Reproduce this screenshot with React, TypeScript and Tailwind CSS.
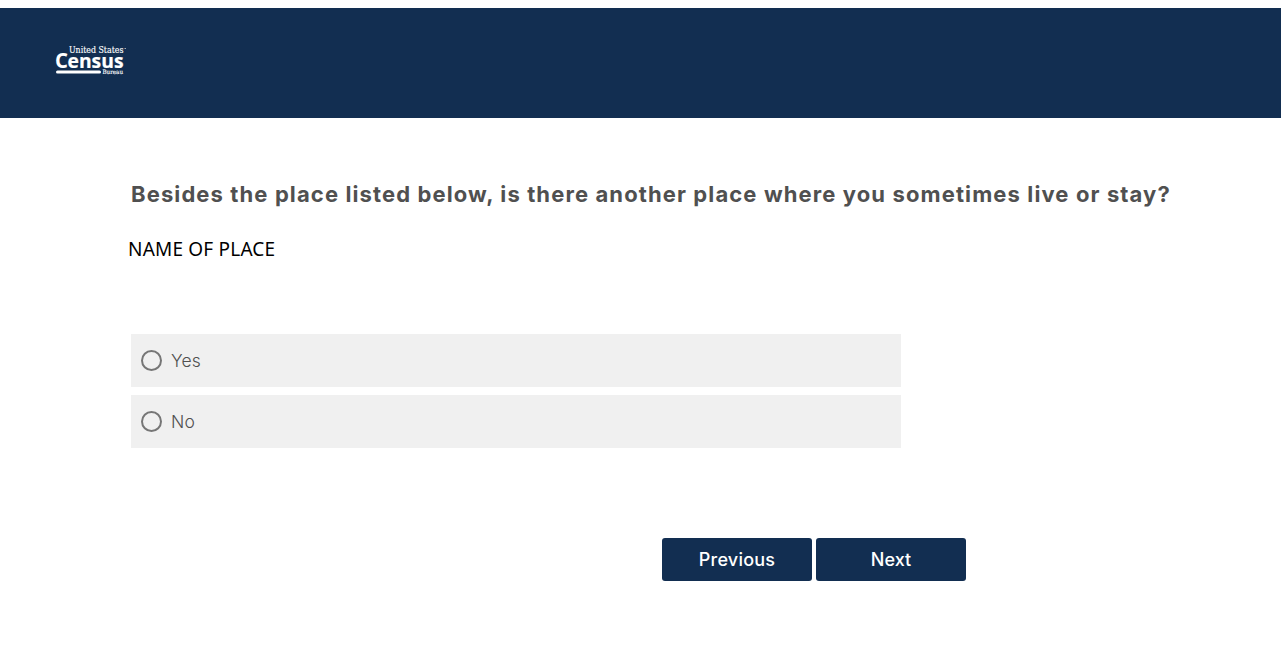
import { useState } from 'react';

const options = ['Yes', 'No'];

function CensusLogo() {
  return (
    <svg width="76" height="36" viewBox="0 -2 76 36" fill="#ffffff" className="overflow-visible" role="img" aria-label="United States Census Bureau">
      <text x="14" y="8.8" fontSize="8.8" stroke="#ffffff" strokeWidth="0.15" textLength="54.5" lengthAdjust="spacingAndGlyphs" className="font-['DejaVu_Serif',serif]">
        United States
      </text>
      <rect x="69.5" y="4" width="1.5" height="1" opacity="0.6" />
      <text x="0" y="23.5" fontSize="22" fontWeight="700" textLength="13" lengthAdjust="spacingAndGlyphs" className="font-['Open_Sans',sans-serif]">
        C
      </text>
      <text x="12.5" y="23.5" fontSize="19.5" fontWeight="700" stroke="#ffffff" strokeWidth="0.2" textLength="56" lengthAdjust="spacingAndGlyphs" className="font-['Open_Sans',sans-serif]">
        ensus
      </text>
      <rect x="1" y="26.5" width="45" height="3" rx="1.5" />
      <text x="47.5" y="29.5" fontSize="6" stroke="#ffffff" strokeWidth="0.15" textLength="20.5" lengthAdjust="spacingAndGlyphs" className="font-['DejaVu_Serif',serif]">
        Bureau
      </text>
    </svg>
  );
}

export default function App() {
  const [answer, setAnswer] = useState<string | null>(null);

  return (
    <div className="h-[647px] overflow-hidden bg-white pt-2 font-['Inter',sans-serif]">
      {/* Header */}
      <header className="h-[110px] bg-[#122e51] pl-[55px] pt-[34px]">
        <CensusLogo />
      </header>

      <main className="pl-[131px] pt-[60px]">
        <h1 className="whitespace-nowrap text-[22px] font-bold leading-8 tracking-[1.11px] text-[#505050]">
          Besides the place listed below, is there another place where you sometimes live or stay?
        </h1>
        <p className="-ml-[3px] mt-[23px] font-['Noto_Sans',sans-serif] text-[19px] leading-8 tracking-[0.2px] text-black">NAME OF PLACE</p>

        {/* Answers */}
        <div className="mt-[69px] flex w-[770px] flex-col gap-2">
          {options.map((option) => (
            <label key={option} className="flex h-[53px] cursor-pointer items-center gap-[9px] bg-[#f0f0f0] pl-2.5">
              <input
                type="radio"
                name="another-place"
                checked={answer === option}
                onChange={() => setAnswer(option)}
                className="size-[21px] appearance-none rounded-full border-2 border-[#767676] checked:border-[6px] checked:border-[#122e51]"
              />
              <span className="pt-0.5 text-[17.5px] font-light tracking-[0.1px] text-[#505050]">{option}</span>
            </label>
          ))}
        </div>

        {/* Navigation */}
        <div className="ml-[531px] mt-[90px] flex gap-1">
          <button className="h-[43px] w-[150px] rounded-[3px] bg-[#122e51] text-[18px] font-medium tracking-[0.2px] text-white">Previous</button>
          <button className="h-[43px] w-[150px] rounded-[3px] bg-[#122e51] text-[18px] font-medium text-white">Next</button>
        </div>
      </main>
    </div>
  );
}
